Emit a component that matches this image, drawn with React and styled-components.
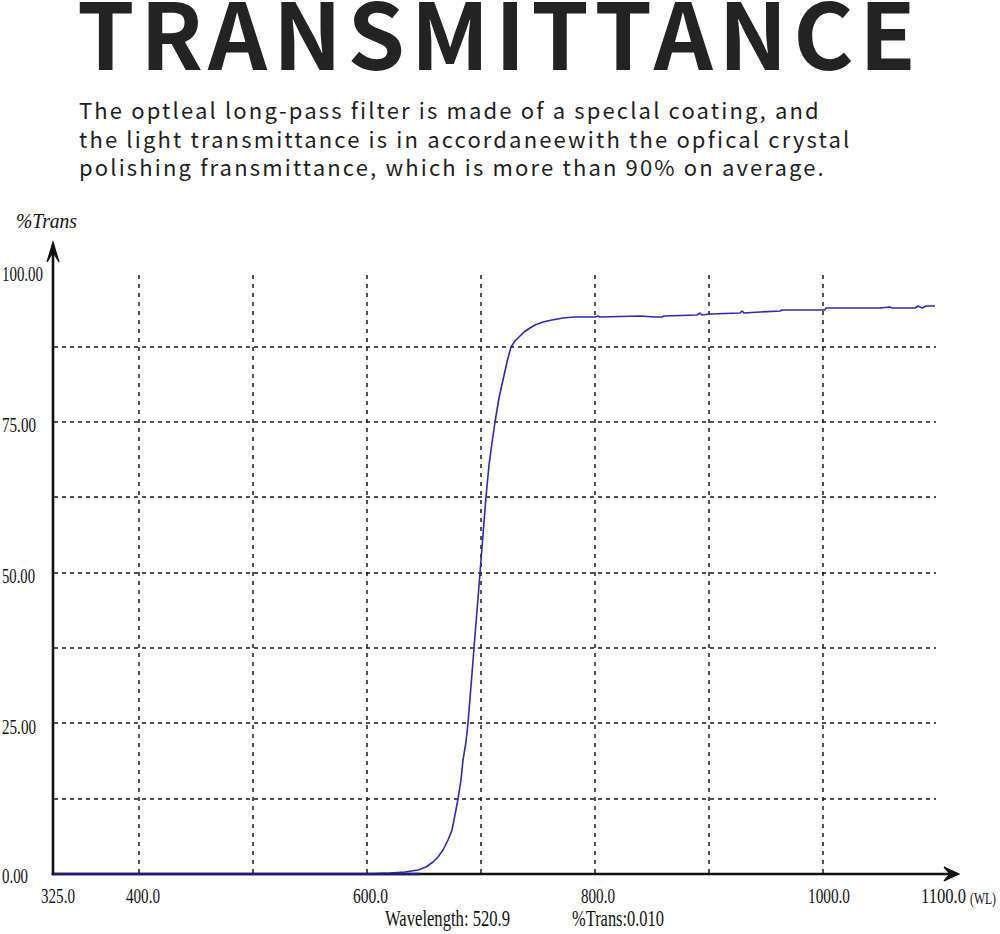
import React from "react";
import styled, { createGlobalStyle } from "styled-components";

const GlobalStyle = createGlobalStyle`
  html, body { margin: 0; padding: 0; background: #ffffff; }
  body { font-family: "Noto Sans CJK SC", "Noto Sans", sans-serif; color: #222; }
`;

const Page = styled.div`
  width: 1000px;
  height: 934px;
  overflow: hidden;
  background: #fff;
  display: flex;
  flex-direction: column;
`;

const Header = styled.header`
  height: 200px;
  padding-left: 77px;
  box-sizing: border-box;
  display: flex;
  flex-direction: column;
`;

const Title = styled.h1`
  margin: 0;
  font-family: "Noto Sans CJK SC", "Noto Sans", sans-serif;
  font-weight: 700;
  font-size: 92px;
  line-height: 60px;
  letter-spacing: 5.8px;
  color: #232323;
  white-space: nowrap;
`;

const Description = styled.p`
  margin: 35px 0 0 2px;
  font-family: "Noto Sans CJK SC", "Noto Sans", sans-serif;
  font-weight: 400;
  font-size: 22px;
  line-height: 28.5px;
  letter-spacing: 2.15px;
  color: #1e1e1e;
  white-space: nowrap;
`;

const ChartFigure = styled.figure`
  margin: 0;
  flex: 1;
  display: block;
  svg { display: block; }
`;

const AXIS = "#111";
const GRID = "#1a1a1a";
const CURVE = "#2b2bb3";
const LABEL_FONT = "'Liberation Serif', 'DejaVu Serif', serif";

const xs = [139, 253, 367, 481, 595, 709, 823];
const ys = [347, 422, 497, 573, 648, 723, 799];

const curve = [
  [53, 874], [367, 874], [390, 873], [405, 872], [418, 870], [426, 867], [433, 862],
  [438, 857], [443, 850], [448, 840], [452, 830], [455, 815], [458, 799], [461, 780],
  [463, 760], [466, 742], [468, 723], [471, 686], [474, 648], [477, 611], [480, 573],
  [483, 535], [486, 497], [489, 465], [491, 450], [493, 436], [495, 422], [499, 398],
  [503, 380], [507, 362], [511, 347], [515, 341], [519, 337], [524, 332], [530, 328],
  [535, 325], [543, 322], [552, 320], [563, 318], [574, 317], [595, 317], [598, 316],
  [600, 317], [640, 316], [655, 317], [662, 317], [664, 316], [697, 315], [700, 313],
  [702, 315], [710, 314], [740, 313], [742, 311], [744, 313], [760, 312], [780, 311],
  [782, 310], [825, 310], [826, 308], [880, 308], [890, 307], [892, 308], [915, 308],
  [918, 306], [922, 308], [926, 306], [935, 306],
];

const yLabels = [
  { t: "100.00", y: 281, w: 41 },
  { t: "75.00", y: 432, w: 34 },
  { t: "50.00", y: 583, w: 33 },
  { t: "25.00", y: 734, w: 34 },
  { t: "0.00", y: 883, w: 26 },
];

const xLabels = [
  { t: "325.0", x: 41, w: 34 },
  { t: "400.0", x: 126, w: 34 },
  { t: "600.0", x: 353, w: 35 },
  { t: "800.0", x: 581, w: 34 },
  { t: "1000.0", x: 808, w: 42 },
  { t: "1100.0", x: 921, w: 45 },
];

function Chart() {
  return (
    <svg width="1000" height="734" viewBox="0 200 1000 734">
      <g stroke={GRID} strokeWidth="1.5" fill="none">
        {xs.map((x) => (
          <line key={x} x1={x} y1={275} x2={x} y2={873} strokeDasharray="4 5" />
        ))}
        {ys.map((y) => (
          <line key={y} x1={54} y1={y} x2={936} y2={y} strokeDasharray="4 4" />
        ))}
      </g>
      <g stroke={AXIS} strokeWidth="2.6" fill="none" strokeLinecap="square">
        <line x1={53} y1={874} x2={53} y2={246} />
        <line x1={53} y1={874} x2={954} y2={874} />
      </g>
      <path d="M47 262 L53 242 L59 262 L53 252 Z" fill={AXIS} stroke={AXIS} strokeWidth="1.2" strokeLinejoin="miter" />
      <path d="M944 867 L959 874 L944 881 L950 874 Z" fill={AXIS} stroke={AXIS} strokeWidth="1.2" />
      <polyline
        points={curve.map((p) => p.join(",")).join(" ")}
        fill="none"
        stroke={CURVE}
        strokeWidth="1.6"
        strokeLinejoin="round"
      />
      <line x1={53} y1={874} x2={420} y2={874} stroke="#1c1c7a" strokeWidth="2.4" />
      <g fontFamily={LABEL_FONT} fontSize="22" fill="#111">
        <text x={16} y={228} fontStyle="italic" fontSize="20" textLength={61} lengthAdjust="spacingAndGlyphs">%Trans</text>
        {yLabels.map((l) => (
          <text key={l.t} x={2} y={l.y} textLength={l.w} lengthAdjust="spacingAndGlyphs">{l.t}</text>
        ))}
        {xLabels.map((l) => (
          <text key={l.t} x={l.x} y={903} textLength={l.w} lengthAdjust="spacingAndGlyphs">{l.t}</text>
        ))}
        <text x={970} y={904} fontSize="17" textLength={26} lengthAdjust="spacingAndGlyphs">(WL)</text>
        <text x={385} y={926} fontSize="23" textLength={125} lengthAdjust="spacingAndGlyphs">Wavelength: 520.9</text>
        <text x={572} y={926} fontSize="23" textLength={92} lengthAdjust="spacingAndGlyphs">%Trans:0.010</text>
      </g>
    </svg>
  );
}

export default function App() {
  return (
    <Page>
      <GlobalStyle />
      <Header>
        <Title>TRANSMITTANCE</Title>
        <Description>
          The optleal long-pass filter is made of a speclal coating, and
          <br />
          the light transmittance is in accordaneewith the opfical crystal
          <br />
          polishing fransmittance, which is more than 90% on average.
        </Description>
      </Header>
      <ChartFigure>
        <Chart />
      </ChartFigure>
    </Page>
  );
}
